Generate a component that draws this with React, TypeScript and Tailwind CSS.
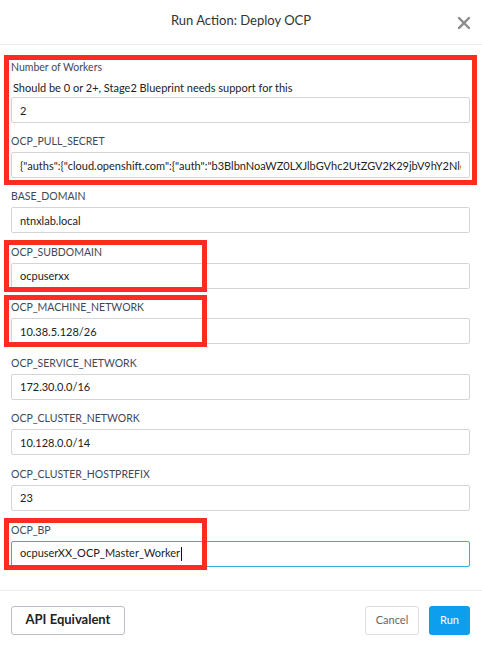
import type { ReactNode } from "react";

type Field = {
  label: string;
  value: string;
  boxed?: boolean;
};

const fields: Field[] = [
  { label: "BASE_DOMAIN", value: "ntnxlab.local" },
  { label: "OCP_SUBDOMAIN", value: "ocpuserxx", boxed: true },
  { label: "OCP_MACHINE_NETWORK", value: "10.38.5.128/26", boxed: true },
  { label: "OCP_SERVICE_NETWORK", value: "172.30.0.0/16" },
  { label: "OCP_CLUSTER_NETWORK", value: "10.128.0.0/14" },
  { label: "OCP_CLUSTER_HOSTPREFIX", value: "23" },
];

const font = { fontFamily: "Lato, 'Open Sans', sans-serif" };

function Label({ children }: { children: ReactNode }) {
  return (
    <div className="h-4 text-[10.5px] leading-4 text-[#3f4857]">{children}</div>
  );
}

function TextInput({ value }: { value: string }) {
  return (
    <input
      type="text"
      defaultValue={value}
      className="mt-[3px] block h-[26px] w-full rounded-[2px] border border-[#d2d5da] bg-white pl-[8px] pr-2 text-[11px] text-[#222] outline-none"
      style={font}
    />
  );
}

// red annotation frame, drawn over the field
function RedBox() {
  return (
    <div className="pointer-events-none absolute -top-[4px] -bottom-[3px] -left-[7px] w-[203px] border-[5px] border-[#fe2b22]" />
  );
}

export default function App() {
  return (
    <div className="h-[645px] w-[482px] overflow-hidden bg-white" style={font}>
      {/* header */}
      <div className="relative h-[45px] border-b border-[#ececec] pt-[12px]">
        <div className="text-center text-[13px] leading-4 text-[#333]">
          Run Action: Deploy OCP
        </div>
        <button type="button" className="absolute right-[12px] top-[17px]">
          <svg width="12" height="12" viewBox="0 0 12 12">
            <path
              d="M1 1 L11 11 M11 1 L1 11"
              stroke="#8c8c8c"
              strokeWidth="2.4"
              strokeLinecap="square"
            />
          </svg>
        </button>
      </div>

      {/* form */}
      <div className="pl-[11px] pr-[12px] pt-[14px] pb-[23px]">
        <div className="relative">
          <div className="pointer-events-none absolute -top-[4px] -bottom-[7px] -left-[7px] -right-[7px] border-[5px] border-[#fe2b22]" />
          <Label>Number of Workers</Label>
          <div className="mt-[5px] pl-[2px] text-[11px] leading-4 text-[#222]">
            Should be 0 or 2+, Stage2 Blueprint needs support for this
          </div>
          <input
            type="text"
            defaultValue="2"
            className="mt-px block h-[26px] w-full rounded-[2px] border border-[#d2d5da] bg-white pl-[8px] text-[11px] text-[#222] outline-none"
            style={font}
          />
          <div className="mt-[10px]">
            <Label>OCP_PULL_SECRET</Label>
            <TextInput value={'{"auths":{"cloud.openshift.com":{"auth":"b3BlbnNoaWZ0LXJlbGVhc2UtZGV2K29jbV9hY2Nlc3MtYjM0ZDQ5'} />
          </div>
        </div>

        <div className="mt-[10px] flex flex-col gap-[10.6px]">
          {fields.map((f) => (
            <div key={f.label} className="relative">
              {f.boxed && <RedBox />}
              <Label>{f.label}</Label>
              <TextInput value={f.value} />
            </div>
          ))}
          <div className="relative">
            <RedBox />
            <Label>OCP_BP</Label>
            <div className="mt-[3px] flex h-[26px] items-center rounded-[2px] border border-[#3aa9e4] bg-white pl-[8px] text-[11px] text-[#222]">
              ocpuserXX_OCP_Master_Worker
              <span className="ml-px inline-block h-[14px] w-px bg-[#111]" />
            </div>
          </div>
        </div>
      </div>

      {/* footer */}
      <div className="flex items-center justify-between border-t border-[#ececec] pl-[11px] pr-[12px] pt-[15px] pb-[10px]">
        <button
          type="button"
          className="h-[29px] w-[114px] rounded-[3px] border border-[#b9bec6] text-[13px] font-bold text-[#222]"
        >
          API Equivalent
        </button>
        <div className="flex gap-[10px]">
          <button
            type="button"
            className="h-[29px] w-[54px] rounded-[3px] border border-[#dcdfe3] text-[11px] text-[#666]"
          >
            Cancel
          </button>
          <button
            type="button"
            className="h-[29px] w-[41px] rounded-[3px] bg-[#0d9eee] text-[11px] text-white"
          >
            Run
          </button>
        </div>
      </div>
    </div>
  );
}
